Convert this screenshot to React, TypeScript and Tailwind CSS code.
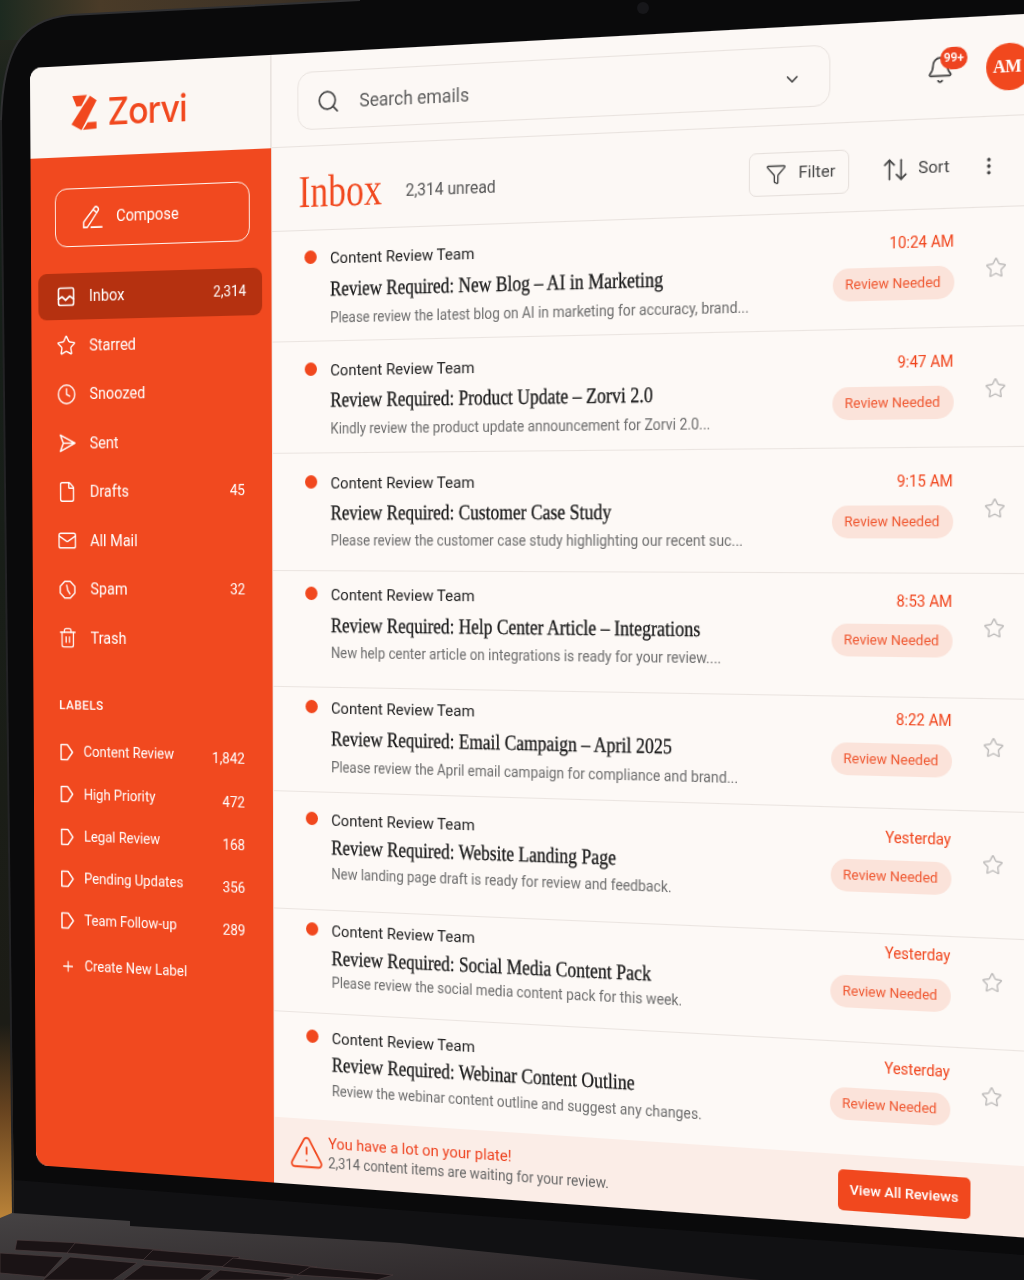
import React from "react";
import { Search, ChevronDown, Bell, Star, Clock, File, Mail, Trash2, Plus, Funnel, ArrowUpDown, EllipsisVertical, TriangleAlert } from "lucide-react";

const W = 1000, H = 1100;
function quad(p: number[][]) {
  const [[x0, y0], [x1, y1], [x2, y2], [x3, y3]] = p;
  const dx1 = x1 - x2, dx2 = x3 - x2, sx = x0 - x1 + x2 - x3;
  const dy1 = y1 - y2, dy2 = y3 - y2, sy = y0 - y1 + y2 - y3;
  const den = dx1 * dy2 - dx2 * dy1;
  const g = (sx * dy2 - dx2 * sy) / den, h = (dx1 * sy - sx * dy1) / den;
  const a = x1 - x0 + g * x1, b = x3 - x0 + h * x3, d = y1 - y0 + g * y1, e = y3 - y0 + h * y3;
  return `matrix3d(${[a / W, d / W, 0, g / W, b / H, e / H, 0, h / H, 0, 0, 1, 0, x0, y0, 0, 1].join(",")})`;
}
const MATRIX = quad([[30, 68], [1024, 14], [1017, 1237], [36, 1165]]);

const sans = "font-['Roboto','Noto_Sans',sans-serif]";
const serif = "font-['Liberation_Serif',serif]";

function Label({ className = "" }: { className?: string }) {
  return <svg viewBox="0 0 18 20" className={className} fill="none" stroke="currentColor" strokeWidth="1.7" strokeLinejoin="round"><path d="M2 2h7.500L15.500 10l-6 8H2z" /></svg>;
}
function InboxIcon() {
  return <svg viewBox="1 1 20 20" className="w-[20px] h-[22px]" fill="none" stroke="currentColor" strokeWidth="1.7" strokeLinejoin="round" strokeLinecap="round"><rect x="2.500" y="2.500" width="17" height="17" rx="2" /><path d="M2.500 13.500l4-2.500 4 3.500 4.500-4 4.500 3" /></svg>;
}
function SendIcon() {
  return <svg viewBox="0 0 22 22" className="w-[21px] h-[23px]" fill="none" stroke="currentColor" strokeWidth="1.7" strokeLinejoin="round" strokeLinecap="round"><path d="M3 2.500L20 11 3 19.500 6.500 11zM6.500 11H20" /></svg>;
}
function SpamIcon() {
  return <svg viewBox="0 0 22 22" className="w-[20px] h-[23px]" fill="none" stroke="currentColor" strokeWidth="1.7" strokeLinejoin="round" strokeLinecap="round"><path d="M7.500 2h7L20 7.500v7L14.500 20h-7L2 14.500v-7z" /><path d="M10 6l1.200 5.500L14 15.500" /></svg>;
}
function PencilIcon() {
  return <svg viewBox="0 0 28 26" className="w-[26px] h-[24px]" fill="none" stroke="currentColor" strokeWidth="1.7" strokeLinejoin="round" strokeLinecap="round"><path d="M2 24v-5.500L15 3.200c1-1.200 2.500-1.400 3.800-.4 1.300 1 1.500 2.600.5 3.800L6.500 24zM13.500 5l4.500 3.600M11 24h13" /></svg>;
}
function Logo() {
  return (
    <svg viewBox="0 0 25 34" preserveAspectRatio="none" className="w-[28px] h-[35px] text-[#F1481E]" fill="currentColor">
      <path d="M1 1l14.500-.6L10 11 5 11.200z" />
      <path d="M18.500 1.500L25 6 10 34l-10-5.800L12 10.500z" />
      <path d="M16 26.800l8.800-.4V33l-13.300.8z" />
    </svg>
  );
}

const nav: { label: string; count?: string; icon: React.ReactNode; active?: boolean }[] = [
  { label: "Inbox", count: "2,314", icon: <InboxIcon />, active: true },
  { label: "Starred", icon: <Star className="w-[23px] h-[25px]" strokeWidth={1.6} /> },
  { label: "Snoozed", icon: <Clock className="w-[23px] h-[26px]" strokeWidth={1.6} /> },
  { label: "Sent", icon: <SendIcon /> },
  { label: "Drafts", count: "45", icon: <File className="w-[22px] h-[28px]" strokeWidth={1.6} /> },
  { label: "All Mail", icon: <Mail className="w-[24px] h-[27px]" strokeWidth={1.6} /> },
  { label: "Spam", count: "32", icon: <SpamIcon /> },
  { label: "Trash", icon: <Trash2 className="w-[24px] h-[29px]" strokeWidth={1.5} /> },
];
const labels = [
  ["Content Review", "1,842"],
  ["High Priority", "472"],
  ["Legal Review", "168"],
  ["Pending Updates", "356"],
  ["Team Follow-up", "289"],
];

const rows = [
  { h: "h-[107px]", a: "pt-[17px]", b: "mt-[7px]", c: "mt-[6px]", t: "pt-[20px]", p: "mt-[13px]", s: "pt-[44px]", subject: "Review Required: New Blog – AI in Marketing", preview: "Please review the latest blog on AI in marketing for accuracy, brand...", time: "10:24 AM" },
  { h: "h-[108px]", a: "pt-[18px]", b: "mt-[6px]", c: "mt-[6px]", t: "pt-[21px]", p: "mt-[13px]", s: "pt-[45px]", subject: "Review Required: Product Update – Zorvi 2.0", preview: "Kindly review the product update announcement for Zorvi 2.0...", time: "9:47 AM" },
  { h: "h-[114px]", a: "pt-[19px]", b: "mt-[6px]", c: "mt-[5px]", t: "pt-[21px]", p: "mt-[13px]", s: "pt-[45px]", subject: "Review Required: Customer Case Study", preview: "Please review the customer case study highlighting our recent suc...", time: "9:15 AM" },
  { h: "h-[113px]", a: "pt-[13px]", b: "mt-[7px]", c: "mt-[5px]", t: "pt-[16px]", p: "mt-[12px]", s: "pt-[39px]", subject: "Review Required: Help Center Article – Integrations", preview: "New help center article on integrations is ready for your review....", time: "8:53 AM" },
  { h: "h-[102px]", a: "pt-[10px]", b: "mt-[7px]", c: "mt-[6px]", t: "pt-[11px]", p: "mt-[13px]", s: "pt-[34px]", subject: "Review Required: Email Campaign – April 2025", preview: "Please review the April email campaign for compliance and brand...", time: "8:22 AM" },
  { h: "h-[115px]", a: "pt-[17px]", b: "mt-[4px]", c: "mt-[4px]", t: "pt-[17px]", p: "mt-[12px]", s: "pt-[38px]", subject: "Review Required: Website Landing Page", preview: "New landing page draft is ready for review and feedback.", time: "Yesterday" },
  { h: "h-[101px]", a: "pt-[10px]", b: "mt-[4px]", c: "mt-[2px]", t: "pt-[8px]", p: "mt-[13px]", s: "pt-[30px]", subject: "Review Required: Social Media Content Pack", preview: "Please review the social media content pack for this week.", time: "Yesterday" },
  { h: "h-[105px]", a: "pt-[14px]", b: "mt-[3px]", c: "mt-[4px]", t: "pt-[13px]", p: "mt-[11px]", s: "pt-[33px]", subject: "Review Required: Webinar Content Outline", preview: "Review the webinar content outline and suggest any changes.", time: "Yesterday" },
];

function Backdrop() {
  return (
    <svg className="absolute inset-0 w-[1024px] h-[1280px]" viewBox="0 0 1024 1280">
      <defs>
        <linearGradient id="bgl" x1="0" y1="0" x2="0" y2="1">
          <stop offset="0" stopColor="#2a2a20" />
          <stop offset="0.1" stopColor="#15201a" />
          <stop offset="0.8" stopColor="#1c1c16" />
          <stop offset="0.87" stopColor="#6a4520" />
          <stop offset="0.95" stopColor="#b98238" />
          <stop offset="1" stopColor="#a9763a" />
        </linearGradient>
        <linearGradient id="bgt" x1="0" y1="0" x2="1" y2="0">
          <stop offset="0" stopColor="#1d2a20" />
          <stop offset="0.25" stopColor="#4a3b28" />
          <stop offset="0.7" stopColor="#3d3226" />
          <stop offset="1" stopColor="#2a241c" />
        </linearGradient>
        <linearGradient id="deck" x1="0" y1="0" x2="1" y2="1">
          <stop offset="0" stopColor="#454243" />
          <stop offset="1" stopColor="#2b2527" />
        </linearGradient>
      </defs>
      <rect width="1024" height="1280" fill="url(#bgl)" />
      <rect width="400" height="40" fill="url(#bgt)" />
      <path d="M1 120C3 50 20 20 70 15L360 0H1024V1280H0L14 1215z" fill="#0a0a0b" />
      <path d="M1 120C3 50 20 20 70 15L360 0" fill="none" stroke="#303032" strokeWidth="2" />
      <path d="M1 120L13 1215" stroke="#232325" strokeWidth="2" />
      <path d="M14 1180L400 1210 720 1233 1024 1255V1280H14z" fill="#111113" />
      <path d="M0 1218L12 1213 130 1221V1226L400 1243 760 1280H0z" fill="url(#deck)" />
      <g fill="#1a1315" stroke="#4a3c3e" strokeWidth="0.7">
        <path d="M17 1240L82 1243 68 1253 15 1250z" />
        <path d="M75 1243L162 1250 148 1260 67 1253z" />
        <path d="M153 1250L240 1257 227 1267 143 1260z" />
        <path d="M233 1258L317 1267 300 1275 222 1267z" />
        <path d="M310 1267L393 1275 377 1280 297 1275z" />
        <path d="M0 1253L63 1257 45 1277 0 1273z" />
        <path d="M70 1257L137 1263 113 1280 43 1280z" />
        <path d="M143 1265L213 1270 200 1280 123 1280z" />
        <path d="M220 1270L293 1277 283 1280 207 1280z" />
      </g>
      <circle cx="643" cy="8" r="6" fill="#17171a" />
    </svg>
  );
}

export default function App() {
  return (
    <div className={`relative w-[1024px] h-[1280px] overflow-hidden bg-black ${sans}`}>
      <Backdrop />
      <div
        className="absolute left-0 top-0 origin-top-left w-[1040px] h-[1100px] flex overflow-hidden rounded-tl-[12px] rounded-bl-[14px] bg-[#FCF8F5] blur-[0.3px]"
        style={{ transform: MATRIX }}
      >
        {/* Sidebar */}
        <aside className="w-[263px] shrink-0 flex flex-col">
          <div className="h-[90px] shrink-0 flex items-center pl-[46px] pt-[2px] gap-[12px] bg-[#FBF7F3] border-r border-[#E9E3DF]">
            <Logo />
            <span className="text-[37px] leading-none font-medium text-[#F1481E] tracking-[-1px] font-['Inter',sans-serif]">Zorvi</span>
          </div>
          <div className="flex-1 bg-[#F1491F] text-white pl-[8px] pr-[10px] pt-[31px]">
            <div className="ml-[19px] w-[213px] h-[58px] flex items-center rounded-[13px] border-[1.5px] border-[#FFF4EE] pl-[29px] gap-[12px]">
              <PencilIcon />
              <span className="text-[16px]">Compose</span>
            </div>
            <nav className="mt-[26px]">
              {nav.map((n) => (
                <div key={n.label} className={`h-[46px] mb-[2.500px] flex items-center pl-[20px] ${n.active ? "bg-[#B53110] pr-[17px] rounded-[9px]" : "pr-[19px]"}`}>
                  <span className="w-[22px] flex justify-center shrink-0">{n.icon}</span>
                  <span className="ml-[14.500px] text-[16px] flex-1">{n.label}</span>
                  {n.count && <span className="text-[14.500px]">{n.count}</span>}
                </div>
              ))}
            </nav>
            <div className="mt-[36.500px] pl-[21px] text-[13px] leading-[16px] font-medium tracking-[0.6px]">LABELS</div>
            <div className="mt-[18px]">
              {labels.map(([l, c]) => (
                <div key={l} className="h-[42.300px] flex items-center pl-[21px] pr-[20px]">
                  <Label className="w-[17px] h-[20px] shrink-0" />
                  <span className="ml-[10px] text-[14.500px] flex-1">{l}</span>
                  <span className="text-[14.500px] mt-[6px]">{c}</span>
                </div>
              ))}
              <div className="h-[43px] mt-[3px] flex items-center pl-[21px]">
                <Plus className="w-[17px] h-[20px] shrink-0" strokeWidth={1.8} />
                <span className="ml-[10px] text-[14.500px]">Create New Label</span>
              </div>
            </div>
          </div>
        </aside>

        {/* Main */}
        <main className="flex-1 min-w-0 flex flex-col border-l border-[#EFE9E5]">
          <header className="h-[90px] shrink-0 flex items-center pl-[27px] pr-[32px] pt-[3px] border-b border-[#E9E3DF]">
            <div className="w-[531px] h-[56px] flex items-center rounded-[15px] border border-[#E9E3DF] pl-[19px] pr-[26px] pt-[3px]">
              <Search className="w-[25px] h-[25px] text-[#444]" strokeWidth={1.7} />
              <span className="ml-[20px] flex-1 text-[18px] text-[#5d5d5d]">Search emails</span>
              <ChevronDown className="w-[18px] h-[18px] text-[#333]" strokeWidth={1.8} />
            </div>
            <div className="ml-auto relative w-[26px] h-[28px]">
              <Bell className="w-[26px] h-[28px] text-[#444]" strokeWidth={1.5} />
              <span className="absolute -top-[6px] left-[13px] w-[25px] h-[20px] rounded-full bg-[#EE4320] text-white text-[11px] font-semibold flex items-center justify-center">99+</span>
            </div>
            <div className={`ml-[29px] w-[42px] h-[42px] pr-[4px] rounded-full bg-[#F1481E] text-white flex items-center justify-center text-[16px] font-bold tracking-[-0.6px] ${serif}`}>AM</div>
          </header>
          <div className="h-[81px] shrink-0 flex items-center pt-[8px] pl-[28px] pr-[61px] border-b border-[#E9E3DF]">
            <h1 className={`text-[44px] leading-none text-[#F1481E] origin-left scale-x-[.85] ${serif}`}>Inbox</h1>
            <span className="ml-[9px] mt-[4px] text-[16px] text-[#555]">2,314 unread</span>
            <div className="ml-auto w-[95px] h-[40px] flex items-center rounded-[7px] border border-[#E6E0DC] pl-[15px]">
              <Funnel className="w-[20px] h-[20px] text-[#444]" strokeWidth={1.6} />
              <span className="ml-[11px] text-[15.500px] text-[#444]">Filter</span>
            </div>
            <ArrowUpDown className="ml-[30px] w-[26px] h-[26px] text-[#444]" strokeWidth={1.5} />
            <span className="ml-[8px] text-[15.500px] text-[#444]">Sort</span>
            <EllipsisVertical className="ml-[26px] w-[20px] h-[22px] text-[#444]" strokeWidth={2} />
          </div>
          <div className="flex-1 min-h-0">
            {rows.map((r) => (
              <div key={r.subject} className={`${r.h} flex pl-[34px] pr-[54.500px] border-b border-[#EBE5E1] bg-[#FDF9F6]`}>
                <div className={`${r.a} w-[27px] shrink-0`}>
                  <div className="mt-[2px] w-[13px] h-[13px] rounded-full bg-[#F1481E]" />
                </div>
                <div className={`${r.a} flex-1 min-w-0`}>
                  <div className="h-[20px] leading-[20px] text-[15.500px] text-[#222]">Content Review Team</div>
                  <div className={`${r.b} h-[24px] leading-[24px] text-[20.500px] text-[#1a1a1a] origin-left scale-x-[.865] [-webkit-text-stroke:0.3px_#1a1a1a] whitespace-nowrap ${serif}`}>{r.subject}</div>
                  <div className={`${r.c} h-[20px] leading-[20px] text-[13.800px] text-[#6d6d6d] whitespace-nowrap`}>{r.preview}</div>
                </div>
                <div className={`${r.t} w-[113px] shrink-0 flex flex-col items-end`}>
                  <div className="h-[18px] leading-[18px] text-[14px] text-[#F0431A]">{r.time}</div>
                  <div className={`${r.p} w-[113px] h-[30px] rounded-full bg-[#FBE3DA] text-[#EF5730] text-[13px] flex items-center justify-center`}>Review Needed</div>
                </div>
                <div className={`${r.s} w-[48px] shrink-0 flex justify-end`}>
                  <Star className="w-[20px] h-[20px] text-[#BDBBBA]" strokeWidth={1.6} />
                </div>
              </div>
            ))}
          </div>
          <footer className="h-[65px] shrink-0 flex items-center pl-[15px] pr-[83px] bg-[#FBEDE7]">
            <TriangleAlert className="w-[38px] h-[46px] text-[#F1481E]" strokeWidth={1.2} />
            <div className="ml-[4px] flex-1">
              <div className="text-[15.300px] leading-[19px] text-[#EE4320]">You have a lot on your plate!</div>
              <div className="text-[13.800px] leading-[18px] text-[#666]">2,314 content items are waiting for your review.</div>
            </div>
            <div className="w-[124px] h-[38px] rounded-[5px] bg-[#F1481E] text-white text-[13.500px] font-medium flex items-center justify-center">View All Reviews</div>
          </footer>
        </main>
      </div>
    </div>
  );
}
